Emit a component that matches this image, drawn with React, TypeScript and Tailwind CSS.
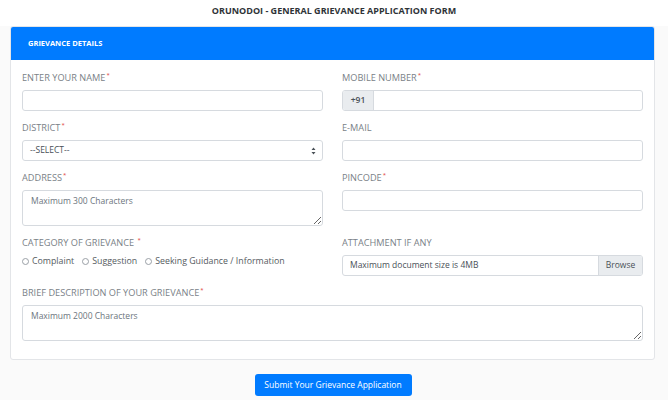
import React from 'react';

const font = { fontFamily: '"Open Sans", "Noto Sans", Arial, sans-serif' };

function Label({ text, required }: { text: string; required?: boolean }) {
  return (
    <div className="mb-[6px] h-[12px] text-[9.2px] leading-[12px] text-[#7a8187] uppercase whitespace-nowrap">
      {text}
      {required && <span className="relative top-[-4px] ml-[1px] text-[6px] text-[#e0413a]">*</span>}
    </div>
  );
}

function Input({ placeholder }: { placeholder?: string }) {
  return (
    <input
      type="text"
      placeholder={placeholder}
      className="block h-[21px] w-full rounded-[3px] border border-[#d6dadf] bg-white px-[8px] text-[8.5px] text-[#495057] outline-none placeholder:text-[#6c757d]"
    />
  );
}

function Radio({ label }: { label: string }) {
  return (
    <label className="flex items-center gap-[3px] text-[8.8px] font-medium text-[#555b61]">
      <span className="inline-block h-[7px] w-[7px] rounded-full border border-[#9aa0a6] bg-white" />
      {label}
    </label>
  );
}

export default function App() {
  return (
    <div className="h-[400px] w-[668px] overflow-hidden bg-[#fafafa]" style={font}>
      <div className="flex h-[26px] items-center justify-center bg-white pb-[4px] text-[9px] font-bold text-[#2f3337]">
        ORUNODOI - GENERAL GRIEVANCE APPLICATION FORM
      </div>

      <div className="mx-[10px] w-[645px] overflow-hidden rounded-[3px] border border-[#e3e5e8] bg-white">
        <div className="flex h-[33px] items-center bg-[#007bff] px-[17px] text-[7.5px] font-bold text-white">
          GRIEVANCE DETAILS
        </div>

        <div className="px-[11px] pt-[12px] pb-[18px]">
          <div className="grid grid-cols-2 gap-x-[19px] gap-y-[11px]">
            <div>
              <Label text="Enter your name" required />
              <Input />
            </div>
            <div>
              <Label text="Mobile number" required />
              <div className="flex h-[21px] overflow-hidden rounded-[3px] border border-[#d6dadf]">
                <span className="flex w-[31px] items-center justify-center border-r border-[#d6dadf] bg-[#e9ecef] text-[8.5px] font-semibold text-[#495057]">
                  +91
                </span>
                <input className="flex-1 px-[8px] text-[8.5px] outline-none" />
              </div>
            </div>

            <div>
              <Label text="District" required />
              <div className="flex h-[21px] items-center justify-between rounded-[3px] border border-[#d6dadf] bg-white pl-[7px] pr-[6px] text-[8.5px] text-[#495057]">
                <span>--SELECT--</span>
                <svg width="5" height="8" viewBox="0 0 5 8" fill="#495057">
                  <path d="M2.5 0.5 L4.5 3 H0.5 Z M2.5 7.5 L4.5 5 H0.5 Z" />
                </svg>
              </div>
            </div>
            <div>
              <Label text="E-mail" />
              <Input />
            </div>

            <div>
              <Label text="Address" required />
              <textarea
                placeholder="Maximum 300 Characters"
                className="block h-[36px] w-full rounded-[3px] border border-[#d6dadf] px-[8px] py-[4px] text-[8.5px] leading-[12px] text-[#495057] outline-none placeholder:text-[#6c757d]"
              />
            </div>
            <div>
              <Label text="Pincode" required />
              <Input />
            </div>

            <div>
              <Label text="Category of grievance " required />
              <div className="flex h-[13px] items-center gap-[8px]">
                <Radio label="Complaint" />
                <Radio label="Suggestion" />
                <Radio label="Seeking Guidance / Information" />
              </div>
            </div>
            <div>
              <Label text="Attachment if any" />
              <div className="flex h-[21px] overflow-hidden rounded-[3px] border border-[#d6dadf] text-[8.5px] text-[#495057]">
                <span className="flex flex-1 items-center px-[7px]">Maximum document size is 4MB</span>
                <span className="flex w-[44px] items-center justify-center border-l border-[#d6dadf] bg-[#e9ecef]">
                  Browse
                </span>
              </div>
            </div>

            <div className="col-span-2">
              <Label text="Brief description of your grievance" required />
              <textarea
                placeholder="Maximum 2000 Characters"
                className="block h-[36px] w-full rounded-[3px] border border-[#d6dadf] px-[8px] py-[4px] text-[8.5px] leading-[12px] text-[#495057] outline-none placeholder:text-[#6c757d]"
              />
            </div>
          </div>
        </div>
      </div>

      <div className="flex justify-center pt-[14px]">
        <button className="ml-[-2px] h-[22px] w-[157px] rounded-[3px] bg-[#007bff] text-[8.5px] text-white">
          Submit Your Grievance Application
        </button>
      </div>
    </div>
  );
}
